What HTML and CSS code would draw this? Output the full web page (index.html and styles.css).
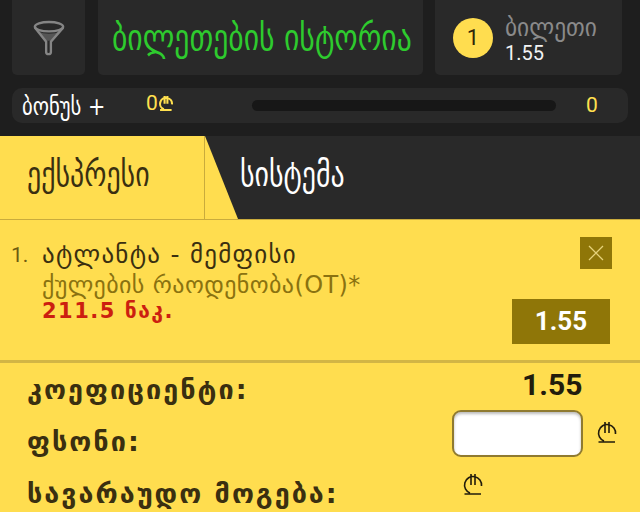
FILE: index.html
```html
<!DOCTYPE html>
<html lang="ka">
<head>
<meta charset="UTF-8">
<title>ბილეთების ისტორია</title>
<link rel="stylesheet" href="styles.css">
</head>
<body>
<svg class="defs" width="0" height="0">
  <symbol id="lari" viewBox="0 0 20 22">
    <path d="M18.500 13A8.500 8.500 0 1 0 7 20M1.500 21H18M8 1V12M12 1V12" fill="none" stroke="currentColor"/>
  </symbol>
</svg>
<div class="top">
  <div class="box filter">
    <svg width="34" height="36" viewBox="0 0 36 38">
      <path d="M6 12Q18 17 30 12L21 22H15Z" fill="#555"/>
      <ellipse cx="18" cy="7" rx="15" ry="5" fill="none" stroke="#858585" stroke-width="2.500"/>
      <path d="M3 8L15 23V34Q15 36 17.500 36Q20 36 20 34V23L33 8" fill="none" stroke="#858585" stroke-width="2.500"/>
    </svg>
  </div>
  <div class="box history"><span class="tall">ბილეთების ისტორია</span></div>
  <div class="box ticket">
    <div class="count">1</div>
    <div class="ticket-info">
      <span class="ticket-word">ბილეთი</span>
      <span class="ticket-odd">1.55</span>
    </div>
  </div>
</div>
<div class="bonus">
  <span class="tall bonus-word">ბონუს +</span>
  <span class="bonus-sum">0<svg class="lari-small"><use href="#lari"/></svg></span>
  <div class="track"></div>
  <span class="bonus-num">0</span>
</div>
<div class="tabs">
  <div class="tab active"><span class="tall">ექსპრესი</span></div>
  <div class="tab dark"><span class="tall">სისტემა</span></div>
</div>
<div class="slip">
  <div class="bet">
    <span class="bet-no">1.</span>
    <div class="bet-text">
      <div class="bet-name">ატლანტა - მემფისი</div>
      <div class="bet-market">ქულების რაოდენობა(OT)*</div>
      <div class="bet-line">211.5 ნაკ.</div>
    </div>
    <div class="bet-side">
      <div class="close">
        <svg width="16" height="16" viewBox="0 0 16 16"><path d="M1 1L15 15M15 1L1 15" stroke="#e6d27a" stroke-width="1.300"/></svg>
      </div>
      <div class="odd">1.55</div>
    </div>
  </div>
  <div class="totals">
    <div class="row">
      <span class="label">კოეფიციენტი:</span>
      <span class="total-odd">1.55</span>
    </div>
    <div class="row">
      <span class="label">ფსონი:</span>
      <input class="stake" type="text">
      <svg class="lari"><use href="#lari"/></svg>
    </div>
    <div class="row">
      <span class="label">სავარაუდო მოგება:</span>
      <svg class="lari win"><use href="#lari"/></svg>
    </div>
  </div>
</div>
</body>
</html>
```

FILE: styles.css
```css
html, body {
  margin: 0;
  height: 512px;
  overflow: hidden;
}

body {
  background: #1e1e1e;
  font-family: "DejaVu Sans", sans-serif;
  color: #fff;
}

.defs {
  position: absolute;
}

.tall {
  display: inline-block;
  font-stretch: condensed;
  transform: scaleY(1.1);
}

.top {
  display: flex;
  gap: 12px;
  padding: 0 18px 0 12px;
  height: 75px;
}

.box {
  background: #292929;
  border-radius: 0 0 5px 5px;
  display: flex;
  align-items: center;
}

.filter {
  width: 73px;
  margin-right: 1px;
  justify-content: center;
}

.history {
  width: 325px;
  padding-left: 14px;
  box-sizing: border-box;
  color: #2ecb2e;
  font-size: 33px;
}

.ticket {
  width: 187px;
  padding-left: 18px;
  box-sizing: border-box;
  gap: 12px;
}

.count {
  width: 40px;
  height: 40px;
  border-radius: 50%;
  background: #ffdd4f;
  color: #2e2508;
  font: 22px/40px Roboto, sans-serif;
  text-align: center;
}

.ticket-info {
  display: flex;
  flex-direction: column;
}

.ticket-word {
  color: #8a8a8a;
  font-size: 26px;
  font-stretch: condensed;
  line-height: 30px;
}

.ticket-odd {
  font: 20px/22px Roboto, sans-serif;
  color: #f2f2f2;
}

.bonus {
  display: flex;
  align-items: center;
  margin: 13px 12px 13px;
  height: 35px;
  background: #292929;
  border-radius: 10px;
  padding-left: 10px;
}

.bonus-word {
  font-size: 23px;
  width: 124px;
}

.bonus-sum {
  width: 106px;
  margin-top: -6px;
  color: #ffe04f;
  font: 21px Roboto, sans-serif;
  display: flex;
  align-items: center;
}

.lari-small {
  width: 14px;
  height: 16px;
  margin-left: 1px;
  stroke-width: 3;
}

.track {
  width: 304px;
  height: 11px;
  border-radius: 6px;
  background: #171717;
}

.bonus-num {
  margin-left: 30px;
  margin-top: -2px;
  color: #ffe04f;
  font: 21px Roboto, sans-serif;
}

.tabs {
  display: flex;
  height: 83px;
  background: #ffdd4f;
  border-bottom: 1px solid #c9ab3c;
}

.tab {
  display: flex;
  align-items: center;
  font-size: 31px;
  padding-bottom: 8px;
  box-sizing: border-box;
}

.active {
  width: 205px;
  padding-left: 27px;
  color: #3a2f10;
  border-right: 1px solid #c9ab3c;
}

.dark {
  flex: 1;
  padding-left: 35px;
  background: #292929;
  clip-path: polygon(0 0, 100% 0, 100% 100%, 33px 100%);
}

.slip {
  background: #ffdd4f;
  color: #3a2f10;
  height: 292px;
}

.bet {
  display: flex;
  height: 143px;
  box-sizing: border-box;
  padding: 17px 30px 0 11px;
  border-bottom: 3px solid #d2b545;
}

.bet-no {
  width: 31px;
  color: #6e5b10;
  font: 21px/36px Roboto, sans-serif;
}

.bet-text {
  flex: 1;
  font-size: 24px;
  line-height: 28px;
}

.bet-name {
  font-size: 25px;
  letter-spacing: 1.25px;
  line-height: 36px;
}

.bet-market {
  margin-top: -2px;
  color: #8a7210;
  letter-spacing: 0.4px;
}

.bet-line {
  color: #cc1f10;
  font-size: 21px;
  font-weight: bold;
  letter-spacing: 1.5px;
  line-height: 24px;
}

.bet-side {
  width: 98px;
  display: flex;
  flex-direction: column;
  align-items: flex-end;
}

.close {
  width: 32px;
  height: 32px;
  margin-right: -2px;
  background: #8f7608;
  display: flex;
  align-items: center;
  justify-content: center;
}

.odd {
  width: 98px;
  height: 45px;
  margin-top: 30px;
  background: #8f7608;
  color: #fff;
  font: bold 26px/45px Roboto, sans-serif;
  text-align: center;
}

.totals {
  padding-left: 27px;
}

.row {
  display: flex;
  align-items: center;
  height: 52px;
}

.label {
  width: 425px;
  font-size: 27px;
  font-weight: bold;
  letter-spacing: 2px;
  white-space: nowrap;
}

.total-odd {
  margin-left: 70px;
  margin-top: -10px;
  color: #221c0c;
  font: bold 30px Roboto, sans-serif;
}

.stake {
  width: 131px;
  height: 47px;
  margin-top: -16px;
  box-sizing: border-box;
  border: 2px solid #8f7a30;
  border-radius: 9px;
  background: #fff;
  box-shadow: inset 0 2px 3px #bbb;
}

.lari {
  width: 20px;
  height: 22px;
  margin: -18px 0 0 14px;
  color: #221c0c;
  stroke-width: 1.600;
}

.win {
  margin-left: 11px;
}
```
